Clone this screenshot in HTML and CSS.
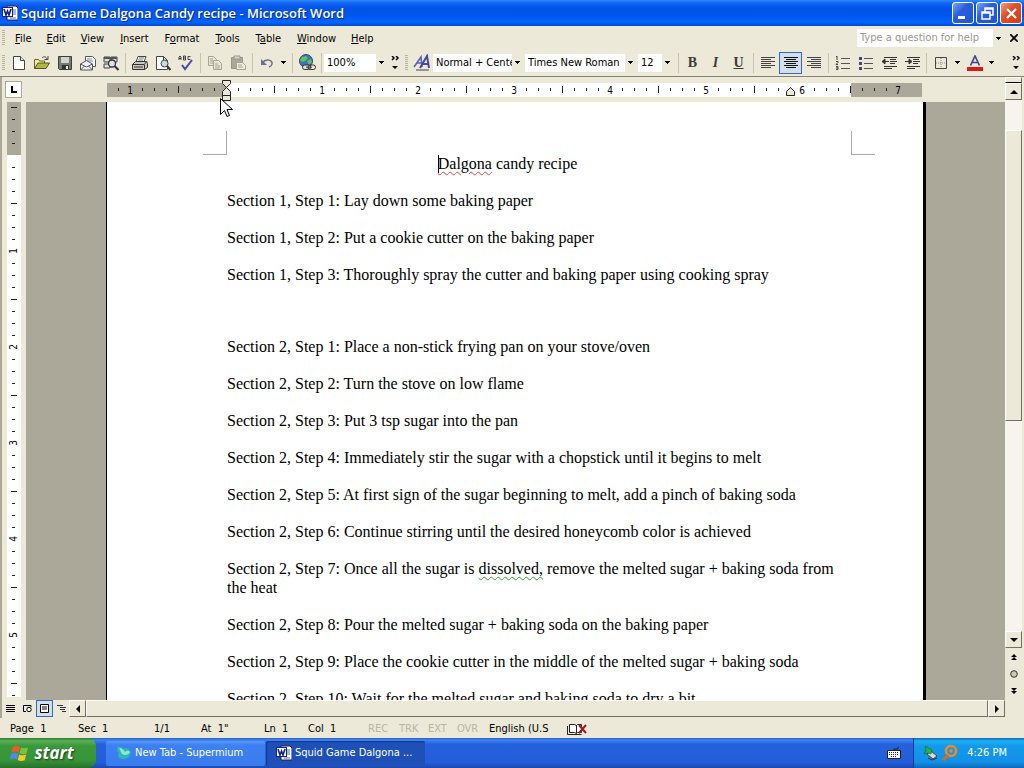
FILE: index.html
```html
<!DOCTYPE html>
<html lang="en">
<head>
<meta charset="utf-8">
<title>Squid Game Dalgona Candy recipe - Microsoft Word</title>
<link rel="stylesheet" href="styles.css">
</head>
<body>
<svg class="defs" aria-hidden="true">
  <symbol id="word" viewBox="0 0 16 16">
    <path d="M5 1h9l2 2v12H5z" fill="#fff" stroke="#223" stroke-width="1"/>
    <path d="M11 5h3M11 7h3M11 9h3M8 13h6" stroke="#556fa8"/>
    <path d="M0 2h11v10H0z" fill="#12208c"/><path d="M1 3h9v8H1z" fill="#fff"/>
    <path d="M2 4l2 6 1.500-4 1.500 4 2-6" fill="none" stroke="#12208c" stroke-width="1.600"/>
  </symbol>
  <symbol id="down" viewBox="0 0 5 3"><path d="M0 0h5v1H4v1H3v1H2V2H1V1H0z"/></symbol>
  <symbol id="more" viewBox="0 0 9 14"><path d="M1 0l2 2-2 2M5 0l2 2-2 2" fill="none" stroke="#000" stroke-width="1.500"/><path d="M1 10h6l-3 3z"/></symbol>
  <pattern id="tick" x="11" y="0" width="12" height="14" patternUnits="userSpaceOnUse"><path d="M0 5h1v3H0z" fill="#222"/></pattern>
  <pattern id="vtick" x="0" y="5" width="14" height="12" patternUnits="userSpaceOnUse"><path d="M5 0h3v1H5z" fill="#222"/></pattern>
</svg>

<header class="titlebar">
  <svg class="i16"><use href="#word"/></svg>
  <h1>Squid Game Dalgona Candy recipe - Microsoft Word</h1>
  <div class="winbtns">
    <button aria-label="Minimize"><svg viewBox="0 0 19 19"><path d="M4 12h7v3H4z" fill="#fff"/></svg></button>
    <button aria-label="Restore"><svg viewBox="0 0 19 19"><path d="M7 8V4h8v7h-3M7 5h8M4 8h8v7H4zM4 9h8" fill="none" stroke="#fff" stroke-width="1.500"/></svg></button>
    <button class="close" aria-label="Close"><svg viewBox="0 0 19 19"><path d="M5 5l9 9M14 5l-9 9" stroke="#fff" stroke-width="2.200"/></svg></button>
  </div>
</header>

<nav class="menubar">
  <i class="grip"></i>
  <button><u>F</u>ile</button><button><u>E</u>dit</button><button><u>V</u>iew</button><button><u>I</u>nsert</button><button>F<u>o</u>rmat</button><button><u>T</u>ools</button><button>T<u>a</u>ble</button><button><u>W</u>indow</button><button><u>H</u>elp</button>
  <div class="ask"><input type="text" placeholder="Type a question for help" aria-label="Type a question for help"><button class="drop" aria-label="Recent questions"><svg><use href="#down"/></svg></button></div>
  <button class="closedoc" aria-label="Close document"><svg viewBox="0 0 8 8"><path d="M0 0l8 8M8 0L0 8" stroke="#000" stroke-width="1.800"/></svg></button>
</nav>

<div class="toolbar">
  <i class="grip"></i>
  <button aria-label="New"><svg viewBox="0 0 16 16"><path d="M2.500 1.500h7l4 4v9h-11z" fill="#fff" stroke="#444"/><path d="M9.500 1.500v4h4" fill="#ddd" stroke="#444"/></svg></button>
  <button aria-label="Open"><svg viewBox="0 0 16 16"><path d="M.5 13.500v-9h4l1 1.500h5v3" fill="#f4ee9a" stroke="#66642c"/><path d="M.5 13.500L4 8h11.500L12 13.500z" fill="#b4b448" stroke="#55561e"/><path d="M8 3c2-2 4-1.500 5 1m1-3v3.500h-3.500" fill="none" stroke="#444"/></svg></button>
  <button aria-label="Save"><svg viewBox="0 0 16 16"><path d="M1.500 1.500h13v13h-12l-1-1z" fill="#77786e" stroke="#3d3e38"/><path d="M4 2h8v6H4z" fill="#d4d4cc"/><path d="M5 10h7v4H5z" fill="#333"/><path d="M9 11h2v3H9z" fill="#eee"/></svg></button>
  <button aria-label="E-mail"><svg viewBox="0 0 16 16"><path d="M5.500 7V1.500h7l3 3v7h-3" fill="#fff" stroke="#555"/><path d="M7 4h5M7 6h6" stroke="#6a88b4"/><path d="M.5 9l6-3.500 6 3.500v6H.5z" fill="#f2f2f6" stroke="#555"/><path d="M.5 9l6 3 6-3M.5 15l4-4M12.500 15l-4-4" fill="none" stroke="#555"/></svg></button>
  <button aria-label="Search"><svg viewBox="0 0 16 16"><path d="M1 2h6v5H1zM8 2h6v5H8zM1 9h6v4H1z" fill="#ddd" stroke="#444"/><path d="M1 2h13v2H1z" fill="#555"/><circle cx="9" cy="8.500" r="3.500" fill="#d4e6ee" stroke="#333" stroke-width="1.300"/><path d="M11.500 11l4 4" stroke="#333" stroke-width="2"/></svg></button>
  <i class="sep"></i>
  <button aria-label="Print"><svg viewBox="0 0 16 16"><path d="M4 7l2-5.500h8L12 7" fill="#fff" stroke="#444"/><path d="M7 3h5M6 5h5" stroke="#777"/><path d="M.5 9.500l3-3h11l1 2v4l-3 2h-12z" fill="#c8c8bc" stroke="#333"/><path d="M.5 9.500h11.500l3-3M2 12h9M12.500 9.500v5" fill="none" stroke="#333"/></svg></button>
  <button aria-label="Print preview"><svg viewBox="0 0 16 16"><path d="M1.500 1.500h7l4 4v9h-11z" fill="#fff" stroke="#444"/><path d="M8.500 1.500v4h4" fill="none" stroke="#444"/><circle cx="9.500" cy="8.500" r="3.500" fill="#bfe0e6" stroke="#444"/><path d="M12 11l3.500 4" stroke="#333" stroke-width="2"/></svg></button>
  <button aria-label="Spelling"><svg viewBox="0 0 16 16"><path d="M1 5V2l1-1 1 1v3M1 3.500h2M5.500 1v4h2V1zM5.500 3h2M12.500 1.500H10v3h2.500" fill="none" stroke="#333" stroke-width=".9"/><path d="M4 10l3 4 7-9" fill="none" stroke="#4848a8" stroke-width="2"/></svg></button>
  <i class="sep"></i>
  <button disabled aria-label="Copy"><svg viewBox="0 0 16 16"><g fill="#e8e6d8" stroke="#a5a392"><path d="M1.500 1.500h5l3 3v6h-8z"/><path d="M6.500 5.500h5l3 3v6h-8z"/><path d="M3 4h3M3 6h3M3 8h3M8 9h3M8 11h5M8 13h5"/></g></svg></button>
  <button disabled aria-label="Paste"><svg viewBox="0 0 16 16"><path d="M1.500 2.500h11v11h-11z" fill="#aaa898" stroke="#98968a"/><path d="M4 1h6v3H4z" fill="#d8d6c8" stroke="#98968a"/><path d="M6.500 7.500h6l3 3v4h-9z" fill="#efede0" stroke="#a5a392"/><path d="M8 10h4M8 12h5" stroke="#a5a392"/></svg></button>
  <i class="sep"></i>
  <button aria-label="Undo"><svg viewBox="0 0 16 16"><path d="M3 8c4-5 11-3 10 1-.3 2-1.500 2.500-3 3" fill="none" stroke="#6a6e94" stroke-width="1.500"/><path d="M2 4v6h6z" fill="#6a6e94"/></svg></button>
  <button class="drop" aria-label="Undo list"><svg><use href="#down"/></svg></button>
  <i class="sep"></i>
  <button aria-label="Insert hyperlink"><svg class="i18" viewBox="0 0 18 18"><circle cx="8" cy="7" r="6.500" fill="#3976b4" stroke="#32485e"/><path d="M4 3l4-1 2 2-3 3-3 1-2-2zM9 7l4-2 1 3-3 3z" fill="#65bd69"/><rect x="4.500" y="11" width="8" height="4.500" rx="2.200" fill="#ddd" stroke="#333"/><rect x="10" y="11" width="7.500" height="4.500" rx="2.200" fill="none" stroke="#333"/><path d="M8 13.200h6" stroke="#333"/></svg></button>
  <i class="sep"></i>
  <span class="combo zoom"><select aria-label="Zoom"><option>100%</option></select><i class="drop"><svg><use href="#down"/></svg></i></span>
  <button class="more" aria-label="More buttons"><svg><use href="#more"/></svg></button>
  <i class="grip"></i>
  <button aria-label="Styles and formatting"><svg class="i18" viewBox="0 0 18 18"><path d="M1 13L8 3l1 10M4 9h5" fill="none" stroke="#5d62b8" stroke-width="1.600"/><path d="M7 14l7-12 2 12M9 10h6" fill="none" stroke="#4449a4" stroke-width="2"/><path d="M3 16h13" stroke="#444"/></svg></button>
  <span class="combo style"><select aria-label="Style"><option>Normal + Centered</option></select><i class="drop"><svg><use href="#down"/></svg></i></span>
  <span class="combo font"><select aria-label="Font"><option>Times New Roman</option></select><i class="drop"><svg><use href="#down"/></svg></i></span>
  <span class="combo size"><select aria-label="Font size"><option>12</option></select><i class="drop"><svg><use href="#down"/></svg></i></span>
  <i class="sep"></i>
  <button class="fmt" aria-label="Bold"><b>B</b></button>
  <button class="fmt" aria-label="Italic"><em>I</em></button>
  <button class="fmt" aria-label="Underline"><u>U</u></button>
  <i class="sep"></i>
  <button aria-label="Align left"><svg viewBox="0 0 16 16"><path d="M1 2.500h14M1 4.500h10M1 6.500h14M1 8.500h10M1 10.500h14M1 12.500h10" stroke="#444"/></svg></button>
  <button class="on" aria-label="Center"><svg viewBox="0 0 16 16"><path d="M1 2.500h14M3 4.500h10M1 6.500h14M3 8.500h10M1 10.500h14M3 12.500h10" stroke="#111"/></svg></button>
  <button aria-label="Align right"><svg viewBox="0 0 16 16"><path d="M1 2.500h14M5 4.500h10M1 6.500h14M5 8.500h10M1 10.500h14M5 12.500h10" stroke="#444"/></svg></button>
  <i class="sep"></i>
  <button aria-label="Numbering"><svg viewBox="0 0 16 16"><path d="M6 3.500h9M6 8.500h9M6 13.500h9" stroke="#555"/><path d="M1 2l1-1v4M1 6.500h2v1l-2 2h2M1 11.500h2v3H1M1 13h2" fill="none" stroke="#444"/></svg></button>
  <button aria-label="Bullets"><svg viewBox="0 0 16 16"><path d="M6 3.500h9M6 8.500h9M6 13.500h9" stroke="#555"/><path d="M1 2h3v3H1zM1 7h3v3H1zM1 12h3v3H1z" fill="#44486e"/></svg></button>
  <button aria-label="Decrease indent"><svg viewBox="0 0 16 16"><path d="M3 2.500h13M9 4.500h6M9 6.500h7M9 8.500h5M3 11.500h13M3 13.500h8" stroke="#333"/><path d="M8 6.500H2M4 4L1 6.500 4 9z" fill="#333" stroke="#333"/></svg></button>
  <button aria-label="Increase indent"><svg viewBox="0 0 16 16"><path d="M3 2.500h13M9 4.500h6M9 6.500h7M9 8.500h5M3 11.500h13M3 13.500h8" stroke="#333"/><path d="M1 6.500h5M5 4l3 2.500L5 9z" fill="#333" stroke="#333"/></svg></button>
  <i class="sep"></i>
  <button aria-label="Outside border"><svg viewBox="0 0 16 16"><path d="M2.500 2.500h11v11h-11z" fill="none" stroke="#444"/><path d="M8 3v10M3 8h10" stroke="#888" stroke-dasharray="1 1"/></svg></button>
  <button class="drop" aria-label="Border list"><svg><use href="#down"/></svg></button>
  <button aria-label="Font color"><svg viewBox="0 0 16 16"><path d="M3.500 10.500L8 1l4.500 9.500M5 7.500h6" fill="none" stroke="#42488c" stroke-width="1.700"/><path d="M0 12h16v4H0z" fill="#d91a1a"/></svg></button>
  <button class="drop" aria-label="Font color list"><svg><use href="#down"/></svg></button>
  <button class="more end" aria-label="More buttons"><svg><use href="#more"/></svg></button>
</div>

<div class="workspace">
  <div class="view">
    <div class="rulerrow">
      <button class="tab" aria-label="Left tab"><svg viewBox="0 0 8 8"><path d="M1 0h2v5h4v2H1z"/></svg></button>
      <div class="hruler">
        <svg viewBox="0 0 816 24" width="816" height="24">
          <path d="M0 5h119v14H0zM744 5h71v14h-71z" fill="#aca899"/><path d="M119 5h625v14H119z" fill="#fff"/>
          <g transform="translate(0 5)"><path d="M0 0h802v14H0z" fill="url(#tick)"/>
          <path d="M71.500 3v7M167.500 3v7M263.500 3v7M359.500 3v7M455.500 3v7M551.500 3v7M647.500 3v7M743.500 3v7" stroke="#222"/></g>
          <path d="M18 8h11v8H18zM786 8h11v8h-11z" fill="#aca899"/>
          <path d="M210 8h11v8h-11zM306 8h11v8h-11zM402 8h11v8h-11zM498 8h11v8h-11zM594 8h11v8h-11zM678 8h24v8h-24z" fill="#fff"/>
          <g class="num"><text x="23" y="16">1</text><text x="215" y="16">1</text><text x="311" y="16">2</text><text x="407" y="16">3</text><text x="503" y="16">4</text><text x="599" y="16">5</text><text x="695" y="16">6</text><text x="791" y="16">7</text></g>
          <g fill="#ece9d8" stroke="#222"><path d="M115.500 2.500h8v3l-4 4-4-4zM115.500 17.500v-4l4-4 4 4v4zM115.500 17.500h8v5h-8z"/><path d="M679.500 17.500v-4l4-4 4 4v4z"/></g>
        </svg>
      </div>
    </div>
    <div class="docrow">
      <div class="vruler">
        <svg width="24" height="598" viewBox="0 0 24 598">
          <path d="M5 0h14v53H5z" fill="#aca899"/><path d="M5 53h14v542H5z" fill="#fff"/>
          <g transform="translate(5 0)"><path d="M0 0h14v594H0z" fill="url(#vtick)"/><path d="M4 5.500h6M4 101.500h6M4 197.500h6M4 293.500h6M4 389.500h6M4 485.500h6M4 581.500h6" stroke="#222"/></g>
          <path d="M8 48h8v11H8zM8 144h8v11H8zM8 240h8v11H8zM8 336h8v11H8zM8 432h8v11H8zM8 528h8v11H8z" fill="#fff"/><path d="M5 47h14v6H5z" fill="#aca899"/>
          <g class="num"><text transform="translate(15 149) rotate(-90)">1</text><text transform="translate(15 245) rotate(-90)">2</text><text transform="translate(15 341) rotate(-90)">3</text><text transform="translate(15 437) rotate(-90)">4</text><text transform="translate(15 533) rotate(-90)">5</text></g>
        </svg>
      </div>
      <div class="desk">
        <main class="page">
          <i class="crop left"></i><i class="crop right"></i>
          <p class="heading"><span class="caret"></span><span class="spell">Dalgona</span> candy recipe</p>
          <p>Section 1, Step 1: Lay down some baking paper</p>
          <p>Section 1, Step 2: Put a cookie cutter on the baking paper</p>
          <p>Section 1, Step 3: Thoroughly spray the cutter and baking paper using cooking spray</p>
          <p class="blank"></p>
          <p>Section 2, Step 1: Place a non-stick frying pan on your stove/oven</p>
          <p>Section 2, Step 2: Turn the stove on low flame</p>
          <p>Section 2, Step 3: Put 3 tsp sugar into the pan</p>
          <p>Section 2, Step 4: Immediately stir the sugar with a chopstick until it begins to melt</p>
          <p>Section 2, Step 5: At first sign of the sugar beginning to melt, add a pinch of baking soda</p>
          <p>Section 2, Step 6: Continue stirring until the desired honeycomb color is achieved</p>
          <p>Section 2, Step 7: Once all the sugar is <span class="grammar">dissolved,</span> remove the melted sugar + baking soda from<br>the heat</p>
          <p>Section 2, Step 8: Pour the melted sugar + baking soda on the baking paper</p>
          <p>Section 2, Step 9: Place the cookie cutter in the middle of the melted sugar + baking soda</p>
          <p>Section 2, Step 10: Wait for the melted sugar and baking soda to dry a bit</p>
        </main>
      </div>
    </div>
    <div class="hscroll">
      <div class="views">
        <button aria-label="Normal view"><svg viewBox="0 0 9 9"><path d="M0 1.500h9M0 3.500h9M0 5.500h9M0 7.500h9" stroke="#000"/></svg></button>
        <button aria-label="Web layout view"><svg viewBox="0 0 9 9"><path d="M8 3V1.500H.5v6H3" fill="none" stroke="#000"/><circle cx="6" cy="5.500" r="2.200" fill="#fff" stroke="#000"/></svg></button>
        <button class="on" aria-label="Print layout view"><svg viewBox="0 0 9 9"><path d="M.5.500h8v8h-8zM2 3h5M2 5h5" fill="#fff" stroke="#000"/></svg></button>
        <button aria-label="Outline view"><svg viewBox="0 0 9 9"><path d="M0 1.500h6M3 3.500h6M3 5.500h5M5 7.500h4" stroke="#333"/></svg></button>
      </div>
      <button class="raised arrow" aria-label="Scroll left"><svg viewBox="0 0 8 8"><path d="M6 0v8L2 4z"/></svg></button>
      <div class="raised thumb"></div>
      <button class="raised arrow" aria-label="Scroll right"><svg viewBox="0 0 8 8"><path d="M2 0v8l4-4z"/></svg></button>
    </div>
  </div>
  <div class="vscroll">
    <div class="raised split"></div>
    <button class="raised arrow" aria-label="Scroll up"><svg viewBox="0 0 8 8"><path d="M0 6h8L4 2z"/></svg></button>
    <div class="track"><div class="raised thumb"></div></div>
    <button class="raised arrow" aria-label="Scroll down"><svg viewBox="0 0 8 8"><path d="M0 2h8L4 6z"/></svg></button>
    <button class="browse" aria-label="Previous page"><svg viewBox="0 0 8 8"><path d="M1 4l3-3 3 3zM1 7l3-3 3 3z"/></svg></button>
    <button class="browse" aria-label="Select browse object"><svg viewBox="0 0 8 8"><circle cx="4" cy="4" r="3.300" fill="#ccc9b8" stroke="#333"/></svg></button>
    <button class="browse" aria-label="Next page"><svg viewBox="0 0 8 8"><path d="M1 1l3 3 3-3zM1 4l3 3 3-3z"/></svg></button>
  </div>
</div>

<footer class="status">
  <span>Page&nbsp; 1</span><span>Sec&nbsp; 1</span><span>1/1</span><span>At&nbsp; 1"</span><span>Ln&nbsp; 1</span><span>Col&nbsp; 1</span>
  <span class="off">REC</span><span class="off">TRK</span><span class="off">EXT</span><span class="off">OVR</span><span>English (U.S</span>
  <svg viewBox="0 0 22 14"><path d="M2.500 2.500h5l2 1 1-1h4v8h-4l-1 1-2-1h-5zM9.500 3v8" fill="#fff" stroke="#222"/><path d="M.5 4v8.500h14" fill="none" stroke="#222"/><path d="M12 3l7 8M19 3l-7 8" stroke="#9c1c2c" stroke-width="2"/></svg>
</footer>

<div class="taskbar">
  <button class="start"><svg viewBox="0 0 20 18"><path d="M3 3c3-2 5-1 7 0L8.500 8.500c-2-1.200-4-1.500-7 0z" fill="#ee5a2c"/><path d="M11 3.500c2 1 4 1 7 0l-1.500 6c-3 1.200-5 .8-7-.3z" fill="#7cc23c"/><path d="M1.200 9.700c3-1.500 5-1 7 0L6.800 15.500c-2-1.200-4-1.500-7 0z" fill="#4c8cf0"/><path d="M9.200 10.400c2 1 4 1.300 7 .2l-1.500 5.600c-3 1.300-5 .8-7-.2z" fill="#f8c82c"/></svg>start</button>
  <button class="task"><svg class="i16" viewBox="0 0 16 16"><path d="M1 2c3-1 5 0 6 2 3-2 6-1 8 3-1 5-4 7-8 7-4 0-6-3-4-6-2-1-2-3-2-6z" fill="#2fb5b8"/><path d="M3 3c3 0 5 2 6 4 2-2 4-1 5 0-1 3-5 4-8 2z" fill="#8ee6cf"/></svg><span>New Tab - Supermium</span></button>
  <button class="task active"><svg class="i16"><use href="#word"/></svg><span>Squid Game Dalgona ...</span></button>
  <svg class="kbd" viewBox="0 0 14 12"><path d="M.5 3.500h13v8H.5z" fill="#fff" stroke="#222"/><path d="M2 5.500h10M2 7.500h10M4 9.500h6" stroke="#222" stroke-dasharray="1 1"/><path d="M7 4V2h4V0" fill="none" stroke="#222"/></svg>
  <div class="tray">
    <svg class="i16" viewBox="0 0 16 16"><path d="M4 9l4-3 6 5-4 3z" fill="#d8dcd4" stroke="#444"/><path d="M2 1l7 4-1 4-3-1-4 1 2-4z" fill="#28b43c" stroke="#14702c" stroke-width=".7"/><path d="M5 13l4 2 5-2" stroke="#333" fill="none"/></svg>
    <svg class="i16" viewBox="0 0 16 16"><circle cx="9" cy="6" r="5" fill="none" stroke="#f28a1e" stroke-width="2.500"/><circle cx="9" cy="6" r="1.800" fill="#f28a1e"/><path d="M6 10l-5 5" stroke="#e06a14" stroke-width="3"/></svg>
    <time>4:26 PM</time>
  </div>
</div>

<svg class="pointer" viewBox="0 0 13 21"><path d="M.5.500v16l4-4 2.500 6 2.500-1-2.500-6h5.500z" fill="#fff" stroke="#000"/></svg>
</body>
</html>
```

FILE: styles.css
```css
* { box-sizing: border-box; }
body {
  margin: 0;
  height: 100vh;
  display: flex;
  flex-direction: column;
  overflow: hidden;
  background: #ece9d8;
  color: #000;
  font: 11px/14px "DejaVu Sans Condensed", "Noto Sans", sans-serif;
}
button, input, select { font: inherit; color: inherit; border: 0; padding: 0; margin: 0; background: none; border-radius: 0; }
button { display: flex; align-items: center; justify-content: center; flex: none; }
svg { display: block; flex: none; }
i { font-style: normal; }
.defs { position: absolute; width: 0; height: 0; }
.i16 { width: 16px; height: 16px; }

.titlebar {
  height: 26px;
  flex: none;
  display: flex;
  align-items: center;
  padding: 0 2px;
  gap: 3px;
  color: #fff;
  background: linear-gradient(#2a8cfc 0, #1464f4 3px, #0054e6 8px, #0056ee 16px, #0466fe 22px, #0048cc 26px);
}
.titlebar h1 { flex: 1; margin: 0; font: 600 13px/20px "Open Sans", sans-serif; text-shadow: 1px 1px #0a2a8c; }
.winbtns { display: flex; gap: 2px; }
.winbtns button { width: 22px; height: 22px; border: 1px solid #fff; border-radius: 3px; background: linear-gradient(135deg, #7ea6f6, #2a5ee0 40%, #2054d4); }
.winbtns .close { background: linear-gradient(135deg, #f0a080, #e0512c 40%, #cc3c14); }
.winbtns svg { width: 19px; height: 19px; }

.grip { width: 3px; height: 16px; flex: none; margin: 0 2px; background: repeating-linear-gradient(#b8b4a2 0 1px, transparent 1px 2px); }
.menubar { height: 24px; flex: none; display: flex; align-items: center; }
.menubar > button { padding: 1px 8px 0 7px; display: block; }
.menubar > .grip { margin-right: 3px; }
.menubar > button:nth-of-type(n+4):nth-of-type(-n+8) { padding-left: 8px; }
.ask { margin-left: auto; display: flex; width: 147px; height: 18px; }
.ask input { flex: 1; min-width: 0; padding: 0 3px; background: #fff; }
.ask input::placeholder { color: #9a9890; opacity: 1; }
.menubar > .closedoc { padding: 0 6px; }
.closedoc svg { width: 8px; height: 8px; }

.toolbar { height: 27px; flex: none; display: flex; align-items: center; border-bottom: 1px solid #858271; padding-bottom: 1px; }
.toolbar button { width: 23px; height: 22px; }
.toolbar button svg { width: 16px; height: 16px; }
.toolbar button .i18 { width: 18px; height: 18px; }
.toolbar .on, .views .on { border: 1px solid #316ac5; background: #d5dcea; }
.toolbar .drop, .ask .drop { width: 11px; display: flex; align-items: center; justify-content: center; }
.toolbar .drop svg, .ask .drop svg { width: 5px; height: 3px; }
.sep { flex: none; width: 1px; height: 20px; margin: 0 2px 0 3px; background: #c5c2b0; }
.toolbar .more { width: 12px; margin-right: 2px; }
.toolbar .more svg { width: 9px; height: 14px; }
.toolbar .end { margin: 0 2px 0 auto; }
.combo { display: flex; height: 18px; flex: none; margin-right: 2px; }
.combo select { appearance: none; flex: 1; min-width: 0; background: #fff; padding: 0 0 0 3px; overflow: hidden; }
.zoom { width: 63px; }
.style { width: 90px; }
.font { width: 111px; }
.size { width: 35px; }
.fmt { font: bold 14px/18px "Liberation Serif", serif; color: #3c3c38; }

.workspace { flex: 1; min-height: 0; display: flex; border-left: 2px solid #aca899; }
.view { flex: 1; min-width: 0; display: flex; flex-direction: column; }
.rulerrow { display: flex; height: 25px; flex: none; padding-top: 1px; }
.tab { width: 17px; height: 17px; margin: 3px 85px 0 3px; background: #fff; border: 1px solid #aca899; }
.tab svg { width: 8px; height: 8px; }
.hruler { flex: 1; min-width: 0; overflow: hidden; }
.num { font: 10px "DejaVu Sans Condensed", "Noto Sans", sans-serif; text-anchor: middle; }
.docrow { flex: 1; min-height: 0; display: flex; overflow: hidden; }
.vruler { width: 24px; flex: none; }
.desk { flex: 1; min-width: 0; background: #aca899; padding-left: 80px; display: flex; align-items: stretch; }
.page {
  position: relative;
  flex: 0 1 820px;
  padding: 52px 75px 0 120px;
  background: #fff;
  border-left: 1px solid #000;
  border-right: 3px solid #000;
  font: 16px/19px "Liberation Serif", serif;
}
.page p { margin: 0 0 18px; }
.page .heading { text-align: center; padding-right: 60px; }
.page .blank { height: 17px; }
.caret { display: inline-block; width: 1px; height: 18px; margin-right: -1px; background: #000; vertical-align: bottom; }
.spell { text-decoration: underline wavy #d44 1px; text-underline-offset: 2px; }
.grammar { text-decoration: underline wavy #3a9a3a 1px; text-underline-offset: 2px; }
.crop { position: absolute; top: 29px; width: 24px; height: 24px; border: 0 solid #aaa; border-bottom-width: 1px; }
.crop.left { left: 96px; border-right-width: 1px; }
.crop.right { right: 48px; border-left-width: 1px; }

.raised { background: #ece9d8; border: 1px solid; border-color: #fff #716f64 #716f64 #fff; }
.arrow { width: 17px; height: 17px; }
.arrow svg, .browse svg { width: 8px; height: 8px; }
.hscroll { display: flex; height: 18px; flex: none; }
.hscroll .thumb { flex: 1; height: 17px; }
.views { display: flex; width: 67px; flex: none; }
.views button { width: 17px; height: 17px; }
.views svg { width: 9px; height: 9px; }
.vscroll { width: 19px; flex: none; display: flex; flex-direction: column; padding: 0 2px 19px 0; }
.split { height: 6px; border-bottom-color: #000; }
.track { flex: 1; padding-top: 30px; background: #f6f4ec; }
.track .thumb { height: 58%; }
.browse { height: 17px; }

.status { height: 20px; flex: none; display: grid; grid-template-columns: 68px 76px 47px 63px 44px 60px 31px 29px 29px 32px 78px 22px; align-items: center; padding: 2px 0 0 10px; }
.status .off { color: #b8b5a4; }
.status svg { width: 22px; height: 14px; }

.taskbar { height: 30px; flex: none; display: flex; align-items: center; color: #fff; background: linear-gradient(#2a5cc8 0, #3c86f0 2px, #2660dc 6px, #245edb 24px, #1c48b0 30px); }
.start { width: 96px; height: 30px; gap: 4px; margin-right: 10px; border-radius: 0 8px 8px 0; font: italic bold 17px/24px "Open Sans", sans-serif; text-shadow: 1px 1px 2px #1a3c14; background: linear-gradient(#2e7a2e 0, #5cb058 3px, #3a983a 8px, #379637 22px, #24702a 30px); padding-right: 12px; }
.start svg { width: 20px; height: 18px; }
.task { width: 159px; height: 25px; margin-right: 1px; padding: 0 10px; justify-content: flex-start; gap: 3px; border-radius: 2px; background: linear-gradient(#5c9afa, #3c80f2 4px, #3a7cee); }
.active { background: #1e50b8; box-shadow: inset 1px 1px 1px #123a8c; }
.kbd { width: 14px; height: 12px; margin: 0 12px 0 auto; }
.tray { height: 30px; display: flex; align-items: center; gap: 3px; padding: 0 17px 0 9px; border-left: 1px solid #0c3c94; background: linear-gradient(#1268b8 0, #1cb0f4 3px, #129aec 8px, #1290e8 24px, #0c68b8 30px); }
.tray time { margin-left: 6px; }
.pointer { position: absolute; left: 220px; top: 98px; width: 13px; height: 21px; }
```
